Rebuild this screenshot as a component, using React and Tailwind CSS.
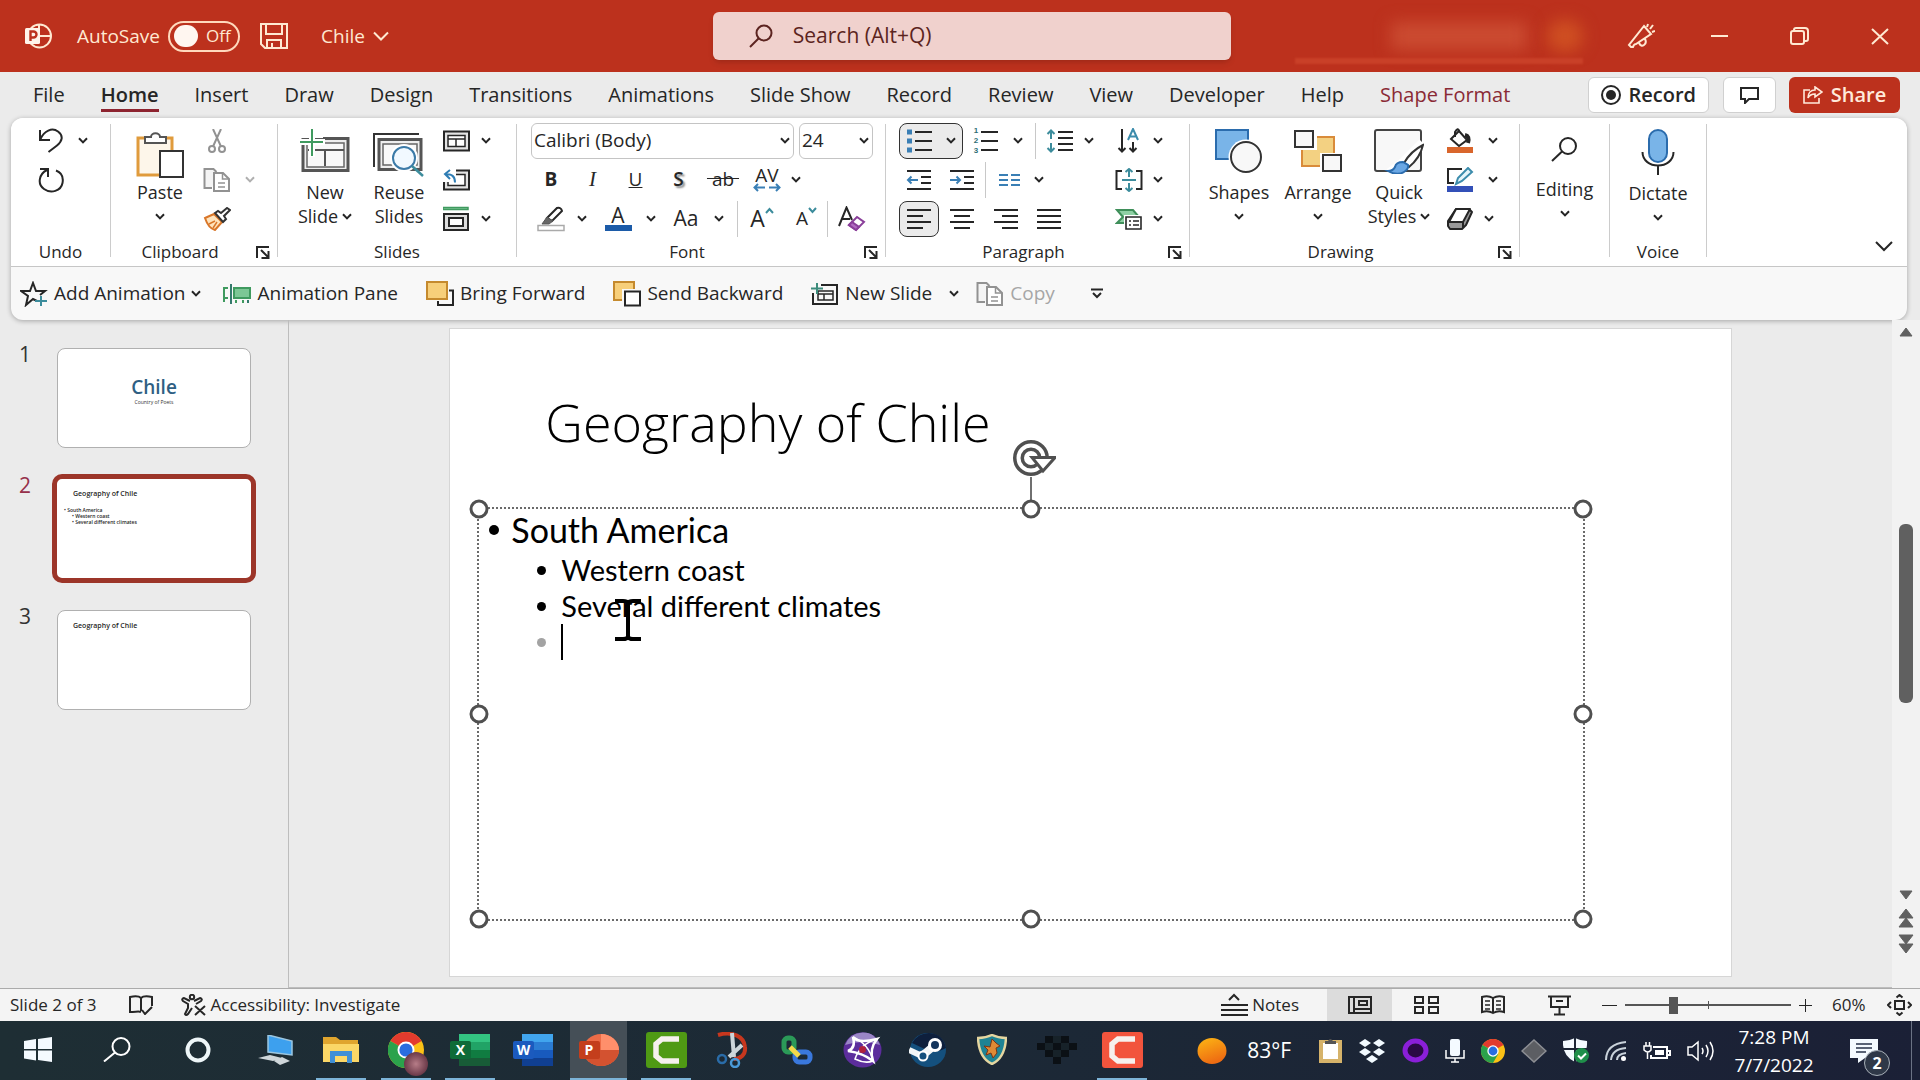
import React, { useState } from 'react';

const TABS = [
  'File', 'Home', 'Insert', 'Draw', 'Design', 'Transitions', 'Animations', 'Slide Show',
  'Record', 'Review', 'View', 'Developer', 'Help', 'Shape Format',
];

/* ---------- helpers ---------- */

const Icon = ({ w = 26, h = 26, sw = 2, className = '', children }) => (
  <svg
    width={w}
    height={h}
    viewBox={`0 0 ${w} ${h}`}
    fill="none"
    stroke="currentColor"
    strokeWidth={sw}
    className={`shrink-0 ${className}`}
    aria-hidden="true"
  >
    {children}
  </svg>
);

const Chevron = ({ className = '' }) => (
  <Icon w={10} h={7} className={className}>
    <path d="M1 1.200 5 5.400 9 1.200" />
  </Icon>
);

const Tool = ({ label, className = '', children }) => (
  <button type="button" aria-label={label} className={`flex h-9 shrink-0 items-center justify-center ${className}`}>
    {children}
  </button>
);

const Row = ({ children, className = '' }) => (
  <div className={`flex h-[39px] items-center ${className}`}>{children}</div>
);

const Sep = ({ className = '' }) => <div className={`h-9 w-px shrink-0 bg-[#c8c8c8] ${className}`} />;

const Group = ({ title, launcher, className = '', children }) => (
  <>
    <section aria-label={title || 'Editing'} className={`flex shrink-0 flex-col pt-[3px] ${className}`}>
      <div className="flex h-[118px]">{children}</div>
      <div className="flex h-[26px] items-center text-[17px]">
        <span className="flex-1 text-center">{title}</span>
        {launcher && (
          <button type="button" aria-label={`${title} settings`} className="flex w-7 justify-center">
            <Icon w={14} h={13} sw={2}>
              <path d="M1 12V1h12M5 4l7 7M12.500 5v7H5.500" />
            </Icon>
          </button>
        )}
      </div>
    </section>
    <div className="mt-[6px] mb-[9px] w-px shrink-0 bg-[#cccccc]" />
  </>
);

const BigTool = ({ icon, lines, inlineChevron, chevron, className = '' }) => (
  <button type="button" className={`flex shrink-0 flex-col items-center text-lg leading-6 ${className}`}>
    <span className="flex h-[59px] items-center justify-center">{icon}</span>
    {lines.map((line, i) => (
      <span key={line} className="flex items-center gap-1 whitespace-nowrap">
        {line}
        {inlineChevron && i === lines.length - 1 && <Chevron />}
      </span>
    ))}
    {chevron && <span className="flex h-6 items-center"><Chevron /></span>}
  </button>
);

/* ---------- shared drawings ---------- */

const CopyIcon = () => (
  <Icon w={28} h={26} sw={2} className="text-[#929292]">
    <path d="M9 21H1.500V2h9l3 3" fill="#f4f4f4" />
    <path d="M11 6h9l6 6v12H11z" fill="#fff" />
    <path d="M19.500 6.500V12H26M15 16h7M15 20h7" strokeWidth="1.500" />
  </Icon>
);

const SmallSlide = () => (
  <>
    <path d="M1 1.500h25v19H1z" fill="#e3e3e3" />
    <path d="M5 5.500h17v11H5z" fill="#fff" strokeWidth="1.500" />
  </>
);

const ChromeLogo = ({ size }) => (
  <svg width={size} height={size} viewBox="0 0 36 36" className="shrink-0" aria-hidden="true">
    <circle cx="18" cy="18" r="18" fill="#fbc116" />
    <path d="M18 18 2.400 9A18 18 0 0 1 33.600 9z" fill="#e33b2e" />
    <path d="M18 18 2.400 9A18 18 0 0 0 18 36l7.800-13.500z" fill="#2ba24c" />
    <circle cx="18" cy="18" r="8.500" fill="#fff" />
    <circle cx="18" cy="18" r="6.600" fill="#2a6de0" />
  </svg>
);

/* ---------- title bar ---------- */

const TitleBar = () => {
  const [autoSave, setAutoSave] = useState(false);
  return (
    <header className="flex h-[72px] shrink-0 items-center bg-[#bc311d] text-[#ffe9d2]">
      <div className="flex flex-1 items-center pl-6">
        <Icon w={28} h={26} sw={2}>
          <circle cx="15.500" cy="13" r="11.500" />
          <path d="M15 2v11h12" />
          <rect x="1" y="5" width="15" height="16" rx="1.500" fill="#fff4ea" stroke="none" />
          <path d="M6.500 18V8.500h3a3 3 0 0 1 0 6h-3" stroke="#bc311d" strokeWidth="2.400" />
        </Icon>
        <span className="ml-[25px] text-[19px]">AutoSave</span>
        <label className="ml-2 flex h-[31px] w-[72px] items-center gap-2 rounded-full border-2 border-[#ffd9bd] pl-1 text-[17px]">
          <input
            type="checkbox"
            aria-label="AutoSave"
            checked={autoSave}
            onChange={(e) => setAutoSave(e.target.checked)}
            className="h-[22px] w-6 appearance-none rounded-full bg-[#fff6f0]"
          />
          {autoSave ? 'On' : 'Off'}
        </label>
        <button type="button" aria-label="Save" className="ml-5">
          <Icon w={28} h={26} sw={2}>
            <path d="M1 1h26v24H5l-4-4zM6 1v10h16V1M7 25v-8h14v8M12 25v-5" />
          </Icon>
        </button>
        <button type="button" className="ml-[33px] flex items-center gap-2 text-[19px]">
          Chile
          <Icon w={16} h={10}><path d="M1 1.500 8 8.500l7-7" /></Icon>
        </button>
      </div>

      <label className="flex h-12 w-[27%] items-center gap-5 rounded-md bg-[#f0d1cd] pl-9 text-[#5c2420] shadow-md">
        <Icon w={24} h={24} sw={2}>
          <circle cx="15" cy="9" r="7.500" />
          <path d="M9.500 14.500 1 23" />
        </Icon>
        <input
          type="text"
          aria-label="Search"
          placeholder="Search (Alt+Q)"
          className="min-w-0 flex-1 bg-transparent text-[21px] outline-none placeholder:text-[#5c2420]"
        />
      </label>

      <div className="flex flex-1 items-center justify-end">
        <div className="relative mr-11 flex items-center gap-5">
          <div className="h-7 w-[136px] bg-[#cb4b31] blur-sm" />
          <div className="h-8 w-9 rounded-full bg-[#cf4f22] blur-sm" />
          <div className="absolute top-[38px] right-0 h-[6px] w-[288px] bg-[#c94028] blur-[1px]" />
        </div>
        <button type="button" aria-label="Coming soon" className="mr-14">
          <Icon w={28} h={26}>
            <path d="m17 3 7 8-15 10q-2 0-3 3H4l-2-2zM12 20q2 4 5 2t1-6M20 4l1-3M23 6l3-4M25 9l3-1" />
          </Icon>
        </button>
        <button type="button" aria-label="Minimize" className="mr-[62px]">
          <Icon w={17} h={4}><path d="M0 2h17" /></Icon>
        </button>
        <button type="button" aria-label="Restore" className="mr-[62px]">
          <Icon w={19} h={18}>
            <rect x="1" y="4" width="13" height="13" rx="2" />
            <path d="M4 4V3a2 2 0 0 1 2-2h9a3 3 0 0 1 3 3v8a2 2 0 0 1-2 2h-1" />
          </Icon>
        </button>
        <button type="button" aria-label="Close" className="mr-[31px]">
          <Icon w={18} h={17}><path d="m1 1 16 15M17 1 1 16" /></Icon>
        </button>
      </div>
    </header>
  );
};

/* ---------- ribbon tabs ---------- */

const TabStrip = () => (
  <nav className="flex h-[46px] shrink-0 items-center justify-between pl-[33px] pr-5">
    <div className="flex items-center gap-9 text-xl whitespace-nowrap">
      {TABS.map((tab) => (
        <button
          key={tab}
          type="button"
          className={
            tab === 'Home'
              ? 'border-b-[3px] border-[#8e2430] pt-[3px] font-semibold leading-7'
              : tab === 'Shape Format'
                ? 'leading-7 text-[#8a2a35]'
                : 'leading-7'
          }
        >
          {tab}
        </button>
      ))}
    </div>
    <div className="flex shrink-0 items-center text-xl font-semibold">
      <button type="button" className="mr-[14px] flex h-9 items-center gap-[7px] rounded-md border border-[#d0d0d0] bg-white px-3">
        <Icon w={20} h={20} sw={2}>
          <circle cx="10" cy="10" r="9" />
          <circle cx="10" cy="10" r="5" fill="currentColor" stroke="none" />
        </Icon>
        Record
      </button>
      <button type="button" aria-label="Comments" className="mr-[13px] flex h-9 w-[53px] items-center justify-center rounded-md border border-[#d0d0d0] bg-white">
        <Icon w={20} h={17}><path d="M1 1h17v11H9l-4 4v-4H1z" /></Icon>
      </button>
      <button type="button" className="flex h-9 w-[111px] items-center justify-center gap-2 rounded-md bg-[#bc311d] text-[#ffeadb]">
        <Icon w={20} h={18} sw={2}>
          <path d="M7 4H1v13h15v-5M12 1l7 5-7 5V8c-4 0-6 2-7 4 0-5 3-8 7-8z" strokeWidth="1.600" />
        </Icon>
        Share
      </button>
    </div>
  </nav>
);

/* ---------- ribbon groups ---------- */

const UndoGroup = () => (
  <Group title="Undo" className="w-[99px]">
    <div>
      <Row className="pl-7">
        <Tool label="Undo" className="w-6">
          <Icon w={24} h={25}>
            <path d="M1 2v10h10M1.500 11C5 3 13-1 19 3.500s4 10-1 14L9.500 24" />
          </Icon>
        </Tool>
        <Tool label="Undo history" className="ml-3 w-4"><Chevron /></Tool>
      </Row>
      <Row className="pl-7">
        <Tool label="Repeat" className="w-6">
          <Icon w={26} h={26}>
            <path d="M2 2h8v8M9 3C1 7-1 17 6 22s17 2 18.500-6S22 5 18 3.500" />
          </Icon>
        </Tool>
      </Row>
    </div>
  </Group>
);

const ClipboardGroup = () => (
  <Group title="Clipboard" launcher className="w-[166px]">
    <BigTool
      className="ml-5 w-[58px]"
      lines={['Paste']}
      chevron
      icon={
        <Icon w={48} h={46} className="mt-2">
          <path d="M2 6h34v37H2z" fill="#fdf6ea" stroke="#e09b3c" strokeWidth="3" />
          <path d="M9 11V5h6c0-5 9-5 9 0h6v6z" fill="#fff" stroke="#555" />
          <path d="M24 19h23v26H24z" fill="#fff" stroke="#333" />
        </Icon>
      }
    />
    <div className="ml-[13px]">
      <Row>
        <Tool label="Cut" className="w-[30px] text-[#929292]">
          <Icon w={18} h={24} sw={2}>
            <circle cx="4" cy="20" r="3" /><circle cx="14" cy="20" r="3" />
            <path d="M5 17.500 13 0M13 17.500 5 0" />
          </Icon>
        </Tool>
      </Row>
      <Row>
        <Tool label="Copy" className="w-[30px]"><CopyIcon /></Tool>
        <Tool label="Copy options" className="ml-2 w-5 text-[#b0b0b0]"><Chevron /></Tool>
      </Row>
      <Row>
        <Tool label="Format Painter" className="w-[30px]">
          <Icon w={28} h={24}>
            <path d="m2 11 9-4 8 8-7 8c-4-1-8-6-10-12z" fill="#ffe4bd" stroke="#d9772a" />
            <path d="m6 17 6-3M10 21l4-6" stroke="#d9772a" strokeWidth="1.500" />
            <path d="m12 6 3-2 3 2 6-5 3 2-6 6 2 3-3 3z" fill="#fff" stroke="#333" />
          </Icon>
        </Tool>
      </Row>
    </div>
  </Group>
);

const SlidesGroup = () => (
  <Group title="Slides" className="w-[238px]">
    <BigTool
      className="ml-4 w-[62px]"
      lines={['New', 'Slide']}
      inlineChevron
      icon={
        <Icon w={50} h={44}>
          <path d="M3 9.500h45v32H3z" fill="#eee" stroke="#555" strokeWidth="3" />
          <path d="M7 14h37v24H7z" fill="#f8f8f8" stroke="#666" strokeWidth="1.500" />
          <path d="M8 21h36M25 21v16" stroke="#555" />
          <path d="M0 0h23v9H0z" fill="#fff" stroke="none" />
          <path d="M12 0v28M0 13h25" stroke="#fff" strokeWidth="6" />
          <path d="M12 0v27M0 13h23" stroke="#3f9a5f" />
        </Icon>
      }
    />
    <BigTool
      className="ml-3 w-[62px]"
      lines={['Reuse', 'Slides']}
      icon={
        <Icon w={52} h={46} className="mt-2">
          <path d="M1 35V2h45" stroke="#333" />
          <path d="M6 7.500h42v30H6z" fill="#eee" stroke="#555" strokeWidth="3" />
          <path d="M10 12h34v21H10z" fill="#f8f8f8" stroke="#666" strokeWidth="1.500" />
          <circle cx="31" cy="26" r="14" fill="#fff" stroke="none" />
          <circle cx="31" cy="26" r="11" fill="#f1f9ff" stroke="#3c7ba8" />
          <path d="m39 34 11 10" stroke="#3c8c9c" strokeWidth="2.500" />
        </Icon>
      }
    />
    <div className="ml-3">
      <Row>
        <Tool label="Layout" className="w-[30px]">
          <Icon w={28} h={22}><SmallSlide /><path d="M5 9h17M13 9v7" strokeWidth="1.500" /></Icon>
        </Tool>
        <Tool label="Layout options" className="ml-1 w-5"><Chevron /></Tool>
      </Row>
      <Row>
        <Tool label="Reset" className="w-[30px]">
          <Icon w={28} h={22}>
            <SmallSlide />
            <path d="M0 0h13v13H0z" fill="#fff" stroke="none" />
            <path d="m7 1-5 4 5 5M2 5.500c7-1 10 2 10 8" stroke="#2f7db4" />
          </Icon>
        </Tool>
      </Row>
      <Row>
        <Tool label="Section" className="w-[30px]">
          <Icon w={28} h={25}>
            <path d="M0 1.500h25v2H0z" fill="#8fd0a4" stroke="#3f9a5f" strokeWidth="1.500" />
            <path d="M1 8h24v16H1z" fill="#ddd" />
            <path d="M6 12h14v8H6z" fill="#fff" />
          </Icon>
        </Tool>
        <Tool label="Section options" className="ml-1 w-5"><Chevron /></Tool>
      </Row>
    </div>
  </Group>
);

const Combo = ({ label, value, className = '' }) => (
  <div className={`relative flex items-center ${className}`}>
    <select
      aria-label={label}
      defaultValue={value}
      className="h-9 w-full appearance-none rounded-md border border-[#c4c4c4] bg-white pl-[2px] text-[19px]"
    >
      <option>{value}</option>
    </select>
    <Chevron className="pointer-events-none absolute right-1" />
  </div>
);

const FontGroup = () => (
  <Group title="Font" launcher className="w-[368px]">
    <div className="pl-[14px]">
      <Row className="gap-[5px]">
        <Combo label="Font" value="Calibri (Body)" className="w-[263px]" />
        <Combo label="Font size" value="24" className="w-[74px]" />
      </Row>
      <Row className="text-[19px]">
        <Tool label="Bold" className="w-10"><b>B</b></Tool>
        <Tool label="Italic" className="w-[43px]">
          <i className="font-['Liberation_Serif',serif] text-[21px]">I</i>
        </Tool>
        <Tool label="Underline" className="w-[43px]"><u>U</u></Tool>
        <Tool label="Shadow" className="w-[43px]">
          <span className="font-semibold [text-shadow:2px_2px_2px_#888]">S</span>
        </Tool>
        <Tool label="Strikethrough" className="w-[46px]"><s>&nbsp;ab&nbsp;</s></Tool>
        <Tool label="Character Spacing" className="w-[42px] flex-col leading-4">
          AV
          <Icon w={28} h={9} sw={2} className="text-[#3a7fb5]">
            <path d="M12 4.500H2M5 1 1.500 4.500 5 8M16 4.500h10M23 1l3.500 3.500L23 8" />
          </Icon>
        </Tool>
        <Tool label="Spacing options" className="w-4"><Chevron /></Tool>
      </Row>
      <Row>
        <Tool label="Highlight" className="w-10">
          <Icon w={28} h={26}>
            <path d="m10 12 10-10q4-1 5 3L15 15z" fill="#fff" />
            <path d="m10 11-5 7h7l4-3z" fill="#666" stroke="#555" strokeWidth="1" />
            <path d="M1 19.500h26v5H1z" fill="#fff" stroke="#aaa" strokeWidth="1.500" />
          </Icon>
        </Tool>
        <Tool label="Highlight color" className="w-[22px]"><Chevron /></Tool>
        <Tool label="Font Color" className="w-[50px] flex-col text-[21px] leading-[19px]">
          A
          <span className="h-[6px] w-[27px] bg-[#1c5ba8]" />
        </Tool>
        <Tool label="Font color options" className="w-4"><Chevron /></Tool>
        <Tool label="Change Case" className="w-[54px] text-[21px]">Aa</Tool>
        <Tool label="Case options" className="w-[11px]"><Chevron /></Tool>
        <Sep className="ml-[13px]" />
        <Tool label="Increase Font Size" className="w-12 text-[23px]">
          A
          <Icon w={9} h={7} className="mb-4 text-[#3c8c9c]"><path d="m1 6 3.500-4L8 6" /></Icon>
        </Tool>
        <Tool label="Decrease Font Size" className="w-[41px] text-[19px]">
          A
          <Icon w={9} h={7} className="mb-4 text-[#3c8c9c]"><path d="m1 1 3.500 4L8 1" /></Icon>
        </Tool>
        <Sep />
        <Tool label="Clear Formatting" className="w-12">
          <Icon w={28} h={26}>
            <path d="M1 20 8.500 1.500 14 14M4 13h8" />
            <path d="m11 19 8-8 7 5-8 8z" fill="#fff" stroke="#8a3f9a" />
            <path d="m11 19 3-3 7 5-3 3z" fill="#b06bc0" stroke="#8a3f9a" />
          </Icon>
        </Tool>
      </Row>
    </div>
  </Group>
);

const ParagraphGroup = () => (
  <Group title="Paragraph" launcher className="w-[303px]">
    <div className="w-[220px] pl-[13px]">
      <Row>
        <button type="button" aria-label="Bullets" className="flex h-9 w-16 items-center justify-center gap-[14px] rounded-lg border border-[#333] bg-[#ebebeb]">
          <Icon w={26} h={24}>
            <path d="M1 3h5M1 12h5M1 21h5" stroke="#3a7fb5" strokeWidth="5" />
            <path d="M9 3h17M9 12h17M9 21h17" />
          </Icon>
          <Chevron />
        </button>
        <Tool label="Numbering" className="w-[46px] gap-[3px]">
          <span className="flex flex-col font-['Liberation_Sans',sans-serif] text-[8px] font-bold leading-[10px] text-[#2d6e76]">
            <span>1</span><span>2</span><span>3</span>
          </span>
          <Icon w={17} h={24}><path d="M0 3h17M0 12h17M0 21h17" /></Icon>
        </Tool>
        <Tool label="Numbering options" className="w-[18px]"><Chevron /></Tool>
        <Sep className="ml-2" />
        <Tool label="Line Spacing" className="w-12">
          <Icon w={28} h={24}>
            <path d="M5 2v8M1.500 5 5 1.500 8.500 5M5 14v8M1.500 19 5 22.500 8.500 19" stroke="#3c8c9c" />
            <path d="M12 3h15M12 9h15M12 15h15M12 21h15" />
          </Icon>
        </Tool>
        <Tool label="Line spacing options" className="w-[10px]"><Chevron /></Tool>
      </Row>
      <Row>
        <Tool label="Decrease List Level" className="w-10">
          <Icon w={26} h={22}>
            <path d="M1 2h24M15 8h10M15 14h10M1 20h24" />
            <path d="M12 11H2M5.500 7.500 2 11l3.500 3.500" stroke="#3a7fb5" />
          </Icon>
        </Tool>
        <Tool label="Increase List Level" className="w-[46px]">
          <Icon w={26} h={22}>
            <path d="M1 2h24M15 8h10M15 14h10M1 20h24" />
            <path d="M1 11h10M7.500 7.500 11 11l-3.500 3.500" stroke="#3a7fb5" />
          </Icon>
        </Tool>
        <Sep />
        <Tool label="Columns" className="w-12">
          <Icon w={22} h={14} className="text-[#3a7fb5]">
            <path d="M0 2h9M0 7h9M0 12h9M12 2h9M12 7h9M12 12h9" />
          </Icon>
        </Tool>
        <Tool label="Column options" className="w-[10px]"><Chevron /></Tool>
      </Row>
      <Row>
        <button type="button" aria-label="Align Left" className="flex h-9 w-10 items-center justify-center rounded-lg border border-[#333] bg-[#ebebeb]">
          <Icon w={24} h={22}><path d="M0 2h24M0 8h16M0 14h24M0 20h16" /></Icon>
        </button>
        <Tool label="Center" className="w-[46px]">
          <Icon w={24} h={22}><path d="M0 2h24M4 8h16M0 14h24M4 20h16" /></Icon>
        </Tool>
        <Tool label="Align Right" className="w-[42px]">
          <Icon w={24} h={22}><path d="M0 2h24M8 8h16M0 14h24M8 20h16" /></Icon>
        </Tool>
        <Tool label="Justify" className="w-[44px]">
          <Icon w={24} h={22}><path d="M0 2h24M0 8h24M0 14h24M0 20h24" /></Icon>
        </Tool>
      </Row>
    </div>
    <div>
      <Row>
        <Tool label="Text Direction" className="w-[46px]">
          <Icon w={24} h={26}>
            <path d="M5 1v22M1.500 20 5 23.500 8.500 20M16 14v9M12.500 20l3.500 3.500 3.500-3.500" />
            <path d="m11 12 5-11 5 11M13 8.500h6.500" stroke="#3c8cac" />
          </Icon>
        </Tool>
        <Tool label="Direction options" className="w-3"><Chevron /></Tool>
      </Row>
      <Row>
        <Tool label="Align Text" className="w-[46px]">
          <Icon w={28} h={24}>
            <path d="M7 3H1.500v18H7M21 3h5.500v18H21" />
            <path d="M7 12h14M14 9V1M10.500 4 14 1l3.500 3M14 15v8M10.500 20l3.500 3 3.500-3" stroke="#3c8c9c" />
          </Icon>
        </Tool>
        <Tool label="Align text options" className="w-3"><Chevron /></Tool>
      </Row>
      <Row>
        <Tool label="Convert to SmartArt" className="w-[46px]">
          <Icon w={28} h={22}>
            <path d="M2 2h16l6 7-6 6H2l6-6z" fill="#8fd0a4" stroke="#3f8f5a" />
            <path d="M11 9h15v12H11z" fill="#fff" stroke="#fff" strokeWidth="4" />
            <path d="M11 9h15v12H11zM14 13h2M18 13h6M14 17h2M18 17h6" fill="#fff" strokeWidth="1.600" />
          </Icon>
        </Tool>
        <Tool label="SmartArt options" className="w-3"><Chevron /></Tool>
      </Row>
    </div>
  </Group>
);

const DrawingGroup = () => (
  <Group title="Drawing" launcher className="w-[329px]">
    <BigTool
      className="ml-3 w-[74px]"
      lines={['Shapes']}
      chevron
      icon={
        <Icon w={48} h={44}>
          <path d="M1 1h32v29H1z" fill="#79b4e8" stroke="#2b6cad" />
          <circle cx="31" cy="28" r="17.500" fill="#fff" stroke="none" />
          <circle cx="31" cy="28" r="15" fill="#f8f8f8" stroke="#333" />
        </Icon>
      }
    />
    <BigTool
      className="ml-1 w-[76px]"
      lines={['Arrange']}
      chevron
      icon={
        <Icon w={48} h={44}>
          <path d="M8 8h32v29H8z" fill="#f3d182" stroke="#d98b3a" />
          <path d="M0 0h23v21H0zM26 24h22v20H26z" fill="#fff" stroke="none" />
          <path d="M1 2h18v16H1zM29 26h18v16H29z" fill="#f8f8f8" stroke="#333" />
        </Icon>
      }
    />
    <BigTool
      className="ml-[5px] w-[76px]"
      lines={['Quick', 'Styles']}
      inlineChevron
      icon={
        <Icon w={50} h={46}>
          <rect x="1" y="2" width="46" height="41" rx="2" fill="#f8f8f8" stroke="#444" />
          <path d="m49 15-20 20-13 10" stroke="#fff" strokeWidth="10" />
          <path d="M49 17q-12 6-19 18l5 4q11-9 14-22z" fill="#fff" stroke="#333" />
          <path d="M29 34q-7 0-8 5-2 4-7 4 9 5 16 1 5-3 4-7z" fill="#6aa7e4" stroke="#2b6cad" />
        </Icon>
      }
    />
    <div className="ml-2">
      <Row>
        <Tool label="Shape Fill" className="w-[30px] flex-col">
          <Icon w={28} h={19}>
            <path d="m13 3 8 9-8 6-8-7z" fill="#fff" /><path d="M13 3q-1-4-4 1v5" />
            <path d="M19 7q5 1 3 8" strokeWidth="4" />
          </Icon>
          <span className="h-[6px] w-[26px] bg-[#d9662c]" />
        </Tool>
        <Tool label="Fill options" className="ml-2 w-5"><Chevron /></Tool>
      </Row>
      <Row>
        <Tool label="Shape Outline" className="w-[30px] flex-col">
          <Icon w={28} h={19}>
            <path d="M16 2H2v14h6" />
            <path d="m10 17 2-6L22 1l4 4-10 9z" fill="#e5f5fb" stroke="#3c8cac" />
          </Icon>
          <span className="h-[6px] w-[26px] bg-[#3350b8]" />
        </Tool>
        <Tool label="Outline options" className="ml-2 w-5"><Chevron /></Tool>
      </Row>
      <Row>
        <Tool label="Shape Effects" className="w-[30px]">
          <Icon w={28} h={24}>
            <path d="M10 2h13l3 3-6 13-4 4H4l-2-3V14z" fill="#999" strokeLinejoin="round" />
            <path d="M10 2h14l-7 13H3z" fill="#fff" strokeLinejoin="round" />
            <path d="M17 15v6" />
          </Icon>
        </Tool>
        <Tool label="Effect options" className="ml-1 w-5"><Chevron /></Tool>
      </Row>
    </div>
  </Group>
);

const Ribbon = () => (
  <div className="mr-[13px] ml-[11px] shrink-0 overflow-hidden rounded-xl bg-[#f8f8f8] shadow-[0_1px_5px_#0000004d]">
    <div className="flex h-[149px] border-b border-[#c6c6c6] bg-white">
      <UndoGroup />
      <ClipboardGroup />
      <SlidesGroup />
      <FontGroup />
      <ParagraphGroup />
      <DrawingGroup />
      <Group className="w-[89px]">
        <BigTool
          className="w-full [&>span:first-child]:h-14"
          lines={['Editing']}
          chevron
          icon={
            <Icon w={28} h={25} sw={2}>
              <circle cx="17" cy="9" r="8" />
              <path d="M11 14.500 1 24" />
            </Icon>
          }
        />
      </Group>
      <Group title="Voice" className="w-[96px]">
        <BigTool
          className="w-full pt-px"
          lines={['Dictate']}
          chevron
          icon={
            <Icon w={34} h={46}>
              <rect x="8" y="1" width="18" height="32" rx="9" fill="#79b4e8" stroke="#2b6cad" />
              <path d="M1.500 23c0 18 31 18 31 0M17 37v9" />
            </Icon>
          }
        />
      </Group>
      <button type="button" aria-label="Collapse ribbon" className="mr-[14px] mb-[14px] ml-auto self-end">
        <Icon w={18} h={11}><path d="m1 1 8 8 8-8" /></Icon>
      </button>
    </div>

    <div className="flex h-[53px] items-center text-[19px] whitespace-nowrap">
      <button type="button" className="ml-[9px] flex items-center gap-[6px]">
        <Icon w={28} h={26}>
          <path d="m17 20-4-2-7 6 2-9-7-5h9l3-8 3 8h9l-5 4" />
          <path d="M21 15v10M15 20h12" stroke="#3c8c9c" />
        </Icon>
        Add Animation
        <Chevron />
      </button>
      <button type="button" className="ml-[22px] flex items-center gap-[6px]">
        <Icon w={28} h={22}>
          <path d="M11 5h16v10H11z" fill="#7cc795" stroke="#3f9a5f" />
          <path d="M5 5H1v10h4M1 15v4M13 17v3M20 17v3" stroke="#3f9a5f" />
          <path d="M8 1v20M25 17v3" stroke="#347a6c" />
        </Icon>
        Animation Pane
      </button>
      <button type="button" className="ml-7 flex items-center gap-[6px]">
        <Icon w={28} h={26}>
          <path d="M1 1h20v17H1z" fill="#f7cf7a" stroke="#c58a2e" />
          <path d="M23 9.500h4V24H12v-4" />
        </Icon>
        Bring Forward
      </button>
      <button type="button" className="ml-7 flex items-center gap-[6px]">
        <Icon w={28} h={26}>
          <path d="M1 1h20v18H1z" fill="#f7cf7a" stroke="#c58a2e" />
          <path d="M9 8h19v18H9z" fill="#f8f8f8" stroke="none" />
          <path d="M12 10.500h15v14H12z" fill="#fff" />
        </Icon>
        Send Backward
      </button>
      <button type="button" className="ml-7 flex items-center gap-[6px]">
        <Icon w={28} h={24}>
          <path d="M10 3h16v19H2V11" />
          <path d="M7 9h15v9H7zM7 12h15M13 12v6" strokeWidth="1.500" />
          <path d="M6 1v11M0 6.500h12" stroke="#3c8c7c" />
        </Icon>
        New Slide
      </button>
      <Tool label="New slide layouts" className="ml-2 w-7"><Chevron /></Tool>
      <button type="button" disabled className="ml-2 flex items-center gap-[6px] text-[#a6a6a6]">
        <CopyIcon />
        Copy
      </button>
      <Tool label="Customize toolbar" className="ml-7 w-7">
        <Icon w={12} h={11}><path d="M0 1.500h12M2 5l4 4 4-4" /></Icon>
      </Tool>
    </div>
  </div>
);

/* ---------- slide panel ---------- */

const Thumb = ({ number, active, children }) => (
  <li className="flex h-[131px]">
    <span className={`w-[31px] text-right text-[21px] leading-5 ${active ? 'text-[#96304a]' : 'text-[#333]'}`}>
      {number}
    </span>
    <button
      type="button"
      aria-label={`Slide ${number}`}
      className={
        active
          ? 'ml-[21px] -mt-px flex h-[109px] w-[204px] flex-col items-start rounded-[10px] border-[5px] border-[#9c3529] bg-white'
          : 'ml-[26px] mt-1 flex h-[100px] w-[194px] flex-col items-start rounded-lg border border-[#b0b0b0] bg-white'
      }
    >
      {children}
    </button>
  </li>
);

const SlidePanel = () => (
  <aside className="w-[288px] shrink-0 pt-6">
    <ol>
      <Thumb number="1">
        <span className="mt-[26px] self-center text-[19px] font-semibold leading-6 text-[#2f5f83]">Chile</span>
        <span className="self-center text-[5px] leading-[6px] text-[#333]">Country of Poets</span>
      </Thumb>
      <Thumb number="2" active>
        <span className="mt-[9px] ml-4 text-[7px] font-semibold leading-3">Geography of Chile</span>
        <ul className="mt-[7px] ml-[7px] text-left text-[5px] font-semibold leading-[6px]">
          <li>• South America</li>
          <li className="ml-2">• Western coast</li>
          <li className="ml-2">• Several different climates</li>
        </ul>
      </Thumb>
      <Thumb number="3">
        <span className="mt-[9px] ml-[15px] text-[7px] font-semibold leading-3">Geography of Chile</span>
      </Thumb>
    </ol>
  </aside>
);

/* ---------- canvas ---------- */

const HANDLES = [
  'left-0 top-0', 'left-1/2 top-0', 'left-full top-0',
  'left-0 top-1/2', 'left-full top-1/2',
  'left-0 top-full', 'left-1/2 top-full', 'left-full top-full',
];

const SlideCanvas = () => (
  <main className="flex flex-1 justify-center border-b border-l border-[#bdbdbd] pt-2 pb-[10px]">
    <div className="flex w-4/5 flex-col border border-[#d6d6d6] bg-white text-black">
      <h1 className="h-[178px] pt-[58px] pl-[95px] text-[52px] font-light leading-[70px]">
        Geography of Chile
      </h1>
      <div className="relative mr-[146px] mb-[55px] ml-[27px] flex-1 border-2 border-dotted border-[#6a6a6a] font-[Lato,'Open_Sans',sans-serif]">
        <ul className="pt-[3px] pl-[10px] text-[34px] leading-9">
          <li className="flex items-center gap-3">
            <span className="size-[10px] rounded-full bg-black" />
            South America
          </li>
          <li className="mt-1 ml-12 flex items-center gap-[15px] text-[29px]">
            <span className="size-[9px] rounded-full bg-black" />
            Western coast
          </li>
          <li className="ml-12 flex items-center gap-[15px] text-[29px]">
            <span className="size-[9px] rounded-full bg-black" />
            Several different climates
          </li>
          <li className="ml-12 flex items-center gap-[15px]">
            <span className="size-[9px] rounded-full bg-[#a3a3a3]" />
            <span className="h-9 w-[2px] bg-black" />
          </li>
        </ul>

        {/* rotate handle */}
        <div className="absolute -top-[70px] left-1/2 flex -translate-x-1/2 flex-col items-center text-[#505050]">
          <Icon w={50} h={38}>
            <circle cx="25" cy="19" r="12.500" stroke="#505050" strokeWidth="11" />
            <circle cx="25" cy="19" r="12.500" stroke="#fff" strokeWidth="4" />
            <path d="M26 18.500h23L37 32z" fill="#fff" strokeWidth="3" />
          </Icon>
          <span className="h-7 w-[2px] bg-[#707070]" />
        </div>
        {HANDLES.map((pos) => (
          <span
            key={pos}
            className={`absolute size-[19px] -translate-x-1/2 -translate-y-1/2 rounded-full border-[3px] border-[#505050] bg-white ${pos}`}
          />
        ))}
        {/* mouse pointer */}
        <Icon w={28} h={42} sw={4} className="absolute top-[90px] left-[135px] text-black">
          <path d="M1 2h8q4 0 5 2 1-2 5-2h8M14 3v36M1 40h8q4 0 5-2 1 2 5 2h8" />
        </Icon>
      </div>
    </div>
  </main>
);

const ScrollBar = () => (
  <div className="flex w-7 shrink-0 flex-col items-center bg-[#f2f2f2] pt-[7px] pb-[34px] text-[#606060]">
    <Icon w={14} h={10} sw={1}><path d="m7 1 6 8H1z" fill="currentColor" /></Icon>
    <div className="flex w-full flex-1 flex-col items-center">
      <div className="flex-[187]" />
      <div className="w-[14px] flex-[178] rounded-md bg-[#606060]" />
      <div className="flex-[187]" />
    </div>
    <Icon w={14} h={10} sw={1}><path d="m7 9 6-8H1z" fill="currentColor" /></Icon>
    <Icon w={16} h={20} sw={1} className="mt-2"><path d="m8 1 7 9H1zM8 10l7 9H1z" fill="currentColor" /></Icon>
    <Icon w={16} h={20} sw={1} className="mt-[6px]"><path d="m8 10 7-9H1zM8 19l7-9H1z" fill="currentColor" /></Icon>
  </div>
);

/* ---------- status bar ---------- */

const StatusBar = () => {
  const [zoom, setZoom] = useState(28);
  return (
    <footer className="flex h-[33px] shrink-0 items-center border-t border-[#ababab] bg-[#f4f4f4] text-[17px]">
      <span className="ml-[10px]">Slide 2 of 3</span>
      <button type="button" aria-label="Spelling" className="ml-8">
        <Icon w={24} h={20}>
          <path d="M12 17c-2-1-5 0-11 0V2c5-1 9-1 11 1 2-2 6-2 11-1v9M12 3v13M13 15l3 4 7-7" />
        </Icon>
      </button>
      <button type="button" className="ml-7 flex items-center gap-[5px]">
        <Icon w={25} h={22}>
          <circle cx="11" cy="3" r="2.200" />
          <path d="M9 7 3 4Q0 5 2 7l5 3v4l-3 6q1 2 3 0l4-6M13 7l6-3q3 1 1 3l-5 3M14 12l10 9M24 12l-10 9" />
        </Icon>
        Accessibility: Investigate
      </button>

      <button type="button" className="mr-7 ml-auto flex items-center gap-1">
        <Icon w={27} h={24}>
          <path d="M0 12h27M0 17h27M0 22h27M8 7l5-5 5 5" />
        </Icon>
        Notes
      </button>
      <button type="button" aria-label="Normal view" className="flex h-full w-[65px] items-center justify-center bg-[#dcdcdc]">
        <Icon w={24} h={18}><path d="M1 1h22v16H1zM6 1v16M6 13h17M11 5h8v4h-8z" /></Icon>
      </button>
      <button type="button" aria-label="Slide sorter" className="flex w-[68px] justify-center">
        <Icon w={25} h={18}><path d="M1 1h8v6H1zM15 1h9v6h-9zM1 11h8v6H1zM15 11h9v6h-9z" /></Icon>
      </button>
      <button type="button" aria-label="Reading view" className="flex w-[66px] justify-center">
        <Icon w={24} h={20}>
          <path d="M12 3Q7 0 1 2v15q6-2 11 1 5-3 11-1V2q-6-2-11 1zv15" />
          <path d="M4 6h5M4 10h5M4 14h5M15 6h5M15 10h5M15 14h5" strokeWidth="1.500" />
        </Icon>
      </button>
      <button type="button" aria-label="Slide show" className="flex w-[67px] justify-center">
        <Icon w={23} h={21}><path d="M0 1.500h23M3 2v10h17V2M8 6h7M11.500 12v8M6 19.500h11" /></Icon>
      </button>
      <button type="button" aria-label="Zoom out" className="mr-2 ml-[9px]">
        <Icon w={15} h={14} sw={1}><path d="M0 7.500h15" /></Icon>
      </button>
      <div className="relative flex items-center">
        <span className="absolute left-1/2 h-2 w-px bg-[#555]" />
        <input
          type="range"
          aria-label="Zoom"
          min="0"
          max="100"
          value={zoom}
          onChange={(e) => setZoom(Number(e.target.value))}
          className="h-[2px] w-[166px] appearance-none bg-[#555] [&::-webkit-slider-thumb]:h-[17px] [&::-webkit-slider-thumb]:w-[9px] [&::-webkit-slider-thumb]:appearance-none [&::-webkit-slider-thumb]:bg-[#555]"
        />
      </div>
      <button type="button" aria-label="Zoom in" className="ml-2">
        <Icon w={13} h={14} sw={1}><path d="M0 7.500h13M6.500 1v13" /></Icon>
      </button>
      <span className="ml-5 w-[55px]">60%</span>
      <button type="button" aria-label="Fit to window" className="mr-2">
        <Icon w={25} h={22}>
          <path d="M8 7h9v8H8zM9.500 3.500 12.500 1l3 2.500M9.500 18.500l3 2.500 3-2.500M4 8l-3 3 3 3M21 8l3 3-3 3" />
        </Icon>
      </button>
    </footer>
  );
};

/* ---------- taskbar ---------- */

const TaskButton = ({ label, open, active, className = 'w-[76px]', children }) => (
  <button
    type="button"
    aria-label={label}
    className={`flex h-full shrink-0 flex-col items-center justify-between ${className}`}
  >
    <span className={`flex w-full flex-1 items-center justify-center ${active ? 'bg-[#454f57]' : ''}`}>{children}</span>
    <span className={`h-[2px] ${open ? 'bg-[#7db4d8]' : ''} ${active ? 'w-full' : 'w-[50px]'}`} />
  </button>
);

const OfficeLogo = ({ letter, colors, round }) => (
  <div className="relative flex h-8 w-10 items-center">
    <svg width="40" height="32" viewBox="0 0 40 32" className="absolute inset-0" aria-hidden="true">
      {round ? (
        <>
          <ellipse cx="22" cy="16" rx="18" ry="16" fill={colors[1]} />
          <path d="M22 0a18 16 0 0 1 18 16H22z" fill={colors[0]} />
          <path d="M4 16a18 16 0 0 0 36 0z" fill={colors[2]} />
        </>
      ) : (
        <>
          <path d="M9 0h31v8H9z" fill={colors[0]} />
          <path d="M9 8h31v8H9z" fill={colors[1]} />
          <path d="M9 16h31v8H9z" fill={colors[2]} />
          <path d="M9 24h31v8H9z" fill={colors[3]} />
        </>
      )}
      <rect y="7" width="21" height="18" rx="2" fill={colors[4]} />
    </svg>
    <span className="relative w-[21px] text-center text-sm font-bold text-white">{letter}</span>
  </div>
);

const Camtasia = ({ color }) => (
  <Icon w={41} h={36}>
    <rect width="41" height="36" rx="3" fill={color} stroke="none" />
    <path d="M33 7H16l-6 5v12l6 5h17" stroke="#f6f1ee" strokeWidth="5.500" />
  </Icon>
);

const HEART = [[1, 0], [3, 0], [0, 1], [2, 1], [4, 1], [1, 2], [3, 2], [2, 3]];

const Taskbar = () => (
  <div className="flex h-[59px] shrink-0 items-stretch bg-linear-to-r from-[#1e2e34] via-[#1c2936] to-[#1b2036] text-white">
    <TaskButton label="Start" className="w-[76px]">
      <Icon w={28} h={25}>
        <path d="M0 4l12-2v10H0zM14 2l14-2v12H14zM0 13.500h12v10l-12-2zM14 13.500h14V25l-14-2z" fill="#f4faff" stroke="none" />
      </Icon>
    </TaskButton>
    <TaskButton label="Search" className="w-[82px]">
      <Icon w={28} h={25}><circle cx="18" cy="9.500" r="8.500" /><path d="M12 15.500 1 24.500" /></Icon>
    </TaskButton>
    <TaskButton label="Cortana" className="w-20">
      <Icon w={28} h={26} sw={4}><circle cx="14" cy="13" r="10.500" stroke="#eef6f8" /></Icon>
    </TaskButton>
    <TaskButton label="Remote Desktop">
      <Icon w={36} h={30}>
        <path d="m10 0 24 6v14L10 17z" fill="#3da0ee" stroke="#9cc6e0" strokeWidth="1.500" />
        <path d="m0 23 12-3 12 3-9 3zM16 26l8-4 8 4-10 4z" fill="#cfd6da" stroke="none" />
      </Icon>
    </TaskButton>
    <TaskButton label="File Explorer" open className="w-[54px]">
      <Icon w={36} h={28}>
        <path d="M0 1h13l4 3h18v22H0z" fill="#e0a52e" stroke="none" />
        <path d="M0 8h36v18H0z" fill="#fbd767" stroke="none" />
        <path d="M7 27V15h22v12h-5v-7H12v7z" fill="#3f8fd6" stroke="none" />
      </Icon>
    </TaskButton>
    <TaskButton label="Chrome" open className="w-[76px]">
      <span className="relative">
        <ChromeLogo size={36} />
        <span className="absolute -right-1 -bottom-2 h-6 w-6 rounded-full bg-radial from-[#b77d88] to-[#4d1f30]" />
      </span>
    </TaskButton>
    <TaskButton label="Excel" open className="w-[52px]">
      <OfficeLogo letter="X" colors={['#33c481', '#21a366', '#107c41', '#185c37', '#0f6b38']} />
    </TaskButton>
    <TaskButton label="Word" className="w-[74px]">
      <OfficeLogo letter="W" colors={['#41a5ee', '#2b7cd3', '#185abd', '#103f91', '#1b5abe']} />
    </TaskButton>
    <TaskButton label="PowerPoint" open active className="w-[57px]">
      <OfficeLogo letter="P" round colors={['#ff8f6b', '#ed6c47', '#d35230', '', '#c43e1c']} />
    </TaskButton>
    <TaskButton label="Camtasia" open className="w-[78px]"><Camtasia color="#4f9a14" /></TaskButton>
    <TaskButton label="Snipping Tool" className="w-[54px]">
      <Icon w={32} h={36}>
        <path d="M2 3c14-4 26 1 27 12 1 8-5 12-11 12" stroke="#c7371e" strokeWidth="4" />
        <path d="M16 1 18 25M26 13 13 25" stroke="#cdd6da" strokeWidth="4" />
        <circle cx="6" cy="27" r="4" stroke="#2a6ca8" strokeWidth="2.500" /><circle cx="19" cy="31" r="4" stroke="#4a9ad9" strokeWidth="2.500" />
      </Icon>
    </TaskButton>
    <TaskButton label="Links">
      <Icon w={32} h={30}>
        <rect x="3" y="3" width="10" height="14" rx="4" stroke="#2b9a58" strokeWidth="5" />
        <rect x="14" y="17" width="15" height="10" rx="4" stroke="#3a78dd" strokeWidth="5" />
        <path d="m9 12 9 9" stroke="#f4d94a" strokeWidth="5" />
      </Icon>
    </TaskButton>
    <TaskButton label="Media" className="w-[54px]">
      <Icon w={39} h={36} sw={2}>
        <ellipse cx="19.500" cy="18" rx="19" ry="17.500" fill="#5c2d9c" stroke="none" />
        <path d="M2 13q5-12 17.500-12.500T37 13q-17-6-35 0z" fill="#9a86c6" stroke="none" />
        <path d="M10 5q5 7 24 2-8 10-4 22-10-8-25-10 8-3 5-14z" stroke="#fff" strokeWidth="2.500" />
        <path d="M34 7Q17 12 12 27q10 5 18 2Q26 12 10 5" stroke="#fff" strokeWidth="1.500" />
        <circle cx="19.500" cy="17.500" r="3.500" fill="#b0203c" stroke="none" />
      </Icon>
    </TaskButton>
    <TaskButton label="Steam">
      <Icon w={37} h={34}>
        <ellipse cx="19" cy="17" rx="18" ry="17" fill="#14507e" stroke="none" />
        <path d="M3 10Q9 0 20 0q14 1 17 15-9 5-17 3z" fill="#0e1f3c" stroke="none" />
        <path d="M0 17l13 6" stroke="#f2f6f8" strokeWidth="6" />
        <path d="m14 22 12-10" stroke="#f2f6f8" strokeWidth="8" />
        <circle cx="26" cy="12" r="6" fill="#fff" stroke="#fff" />
        <circle cx="26" cy="12" r="4" fill="#14355c" stroke="none" />
        <circle cx="14" cy="23" r="4.500" fill="#14507e" stroke="#fff" />
      </Icon>
    </TaskButton>
    <TaskButton label="Game" className="w-[54px]">
      <Icon w={30} h={31}>
        <path d="M1 4q8 0 14-3 6 3 14 3-1 20-14 26Q2 24 1 4z" fill="#1f8394" stroke="#e5d6a0" strokeWidth="2.500" />
        <path d="m15 5 4 4 4 3-4 2 1 5-4 5-2-5-5 2 2-5-4-4 6 1z" fill="#e08a35" stroke="#7c3516" strokeWidth="1" />
      </Icon>
    </TaskButton>
    <TaskButton label="Pixel Heart">
      <Icon w={40} h={28}>
        <path d="M8 0h24v7h8v7h-8v7H8v-7H0V7h8z" fill="#172229" stroke="none" />
        {HEART.map(([x, y]) => (
          <rect key={`${x}-${y}`} x={x * 8} y={y * 7} width="8" height="7" fill="#0b1015" stroke="none" />
        ))}
      </Icon>
    </TaskButton>
    <TaskButton label="Camtasia Recorder" open className="w-[54px]"><Camtasia color="#f2543d" /></TaskButton>

    <button type="button" className="ml-auto flex items-center gap-5 text-[21px]">
      <svg width="30" height="26" viewBox="0 0 30 26" aria-hidden="true">
        <defs>
          <linearGradient id="sun" x1="0" y1="0" x2="0.400" y2="1">
            <stop offset="0" stopColor="#fdb714" />
            <stop offset="1" stopColor="#ee6c12" />
          </linearGradient>
        </defs>
        <ellipse cx="15" cy="13" rx="14.500" ry="13" fill="url(#sun)" />
      </svg>
      83°F
    </button>

    <div className="ml-7 flex items-center gap-4">
      <Icon w={23} h={25}>
        <path d="M0 2h23v23H0z" fill="#d6b36a" stroke="none" /><path d="M4 5h15v16H4z" fill="#fff" stroke="none" />
        <path d="M6 6V3h3q2-4 5 0h3v3z" fill="#555" stroke="none" />
      </Icon>
      <Icon w={28} h={24} sw={0}>
        <path d="m7 0 6 4-6 4-6-4zM21 0l6 4-6 4-6-4zM7 9l6 4-6 4-6-4zM21 9l6 4-6 4-6-4zM14 16l6 4-6 4-6-4z" fill="#f2faff" />
      </Icon>
      <Icon w={27} h={25}><ellipse cx="13.500" cy="12.500" rx="10.500" ry="9.500" stroke="#8a1fd8" strokeWidth="5" fill="#2a0a44" /></Icon>
      <Icon w={20} h={25}>
        <rect x="5" y="1" width="10" height="17" rx="2" fill="#f4faff" stroke="none" /><path d="M1 12v8h18v-8M10 20v4M6 24h8" strokeWidth="1.500" />
      </Icon>
      <ChromeLogo size={24} />
      <Icon w={26} h={24}><path d="m13 1 12 11-12 11L1 12z" fill="#5c5e63" stroke="#8d8f94" strokeWidth="1.500" /></Icon>
      <Icon w={26} h={25} sw={0}>
        <path d="M12 0q6 3 12 3 1 15-12 21Q-1 18 0 3q6 0 12-3z" fill="#f4faff" />
        <path d="M11 0h2v24h-2zM0 10h24v2H0z" fill="#1c2536" />
        <circle cx="18.500" cy="17.500" r="7.500" fill="#1f8e4a" />
        <path d="m15 17.500 3 3 5-5" stroke="#fff" strokeWidth="2" />
      </Icon>
      <Icon w={22} h={20} className="text-[#c9d2da]">
        <path d="M1 19Q1 3 21 1M6 19Q7 8 21 7M12 19q0-6 9-7" />
        <circle cx="18.500" cy="17.500" r="2.500" fill="#fff" stroke="none" />
      </Icon>
      <Icon w={28} h={18}>
        <path d="M10 5h14v11H8v-3M24 9h3v4h-3" /><path d="M12 8h9v5h-9z" fill="#fff" stroke="none" />
        <path d="M1 4h7v4q-3 4-7 0zM3 0v4M6.500 0v4M4.500 10v7" strokeWidth="1.500" />
      </Icon>
      <Icon w={28} h={22} sw={2}>
        <path d="M1 7h4l6-5v18l-6-5H1z" strokeWidth="1.500" /><path d="M15 8q2 3 0 6M19 5q4 6 0 12M23 2q6 9 0 18" strokeWidth="1.500" />
      </Icon>
    </div>

    <time className="ml-4 flex w-[86px] flex-col justify-center text-center text-[19px] leading-7 whitespace-nowrap">
      <span>7:28 PM</span>
      <span>7/7/2022</span>
    </time>
    <button type="button" aria-label="Notifications" className="relative mr-[21px] ml-[33px] flex w-10 items-center">
      <Icon w={28} h={26}>
        <path d="M0 1h28v19H15l-7 5v-5H0z" fill="#f4faff" stroke="none" /><path d="M6 6h16M6 10h16M6 14h10" stroke="#26324a" strokeWidth="1.500" />
      </Icon>
      <span className="absolute right-0 bottom-1 flex size-[26px] items-center justify-center rounded-full border border-[#a8b0b8] bg-[#2f3848] text-base font-bold">2</span>
    </button>
    <div className="mr-2 w-px bg-[#6b7284]" />
  </div>
);

const App = () => (
  <div className="flex h-screen min-h-[900px] min-w-[1880px] flex-col overflow-hidden bg-[#ebebeb] font-['Open_Sans','Noto_Sans',sans-serif] text-[#262626]">
    <TitleBar />
    <TabStrip />
    <Ribbon />
    <div className="flex min-h-0 flex-1">
      <SlidePanel />
      <SlideCanvas />
      <ScrollBar />
    </div>
    <StatusBar />
    <Taskbar />
  </div>
);

export default App;
